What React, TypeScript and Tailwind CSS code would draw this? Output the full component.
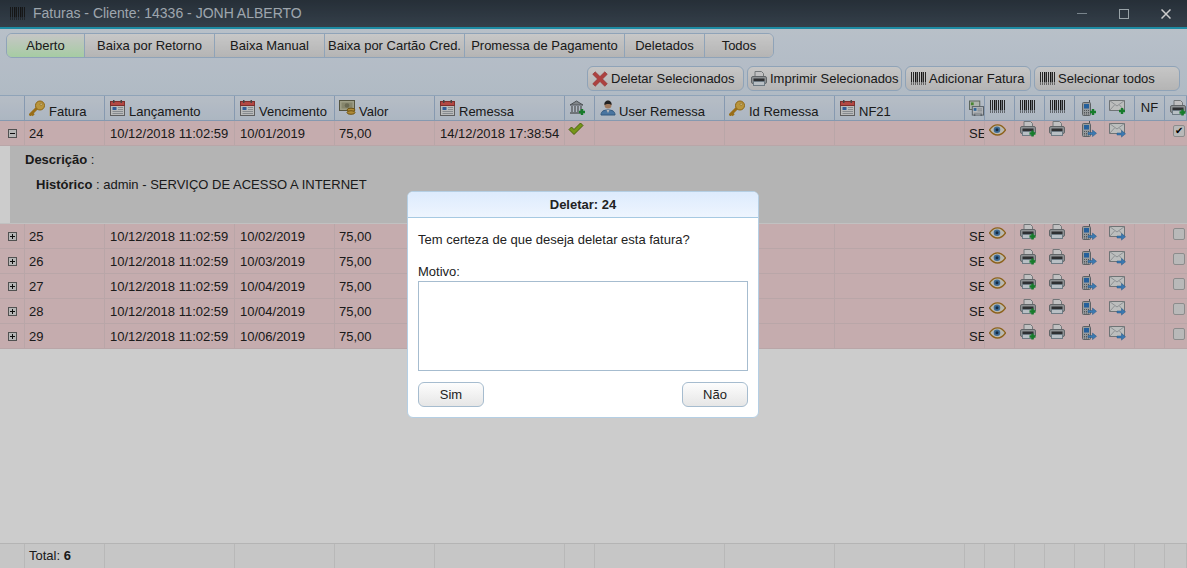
import type { ReactNode } from "react";

const gridCols =
  "grid-cols-[25px_80px_130px_100px_100px_130px_30px_130px_110px_130px_20px_30px_30px_30px_30px_30px_30px_22px]";

// ícones desenhados à mão, mesmo tamanho dos originais
function Barcode({ className = "" }: { className?: string }) {
  const bars = [0, 2, 4, 6, 8, 10, 12, 14];
  return (
    <svg width="15" height="13" viewBox="0 0 15 13" className={className}>
      {bars.map((x) => (
        <rect key={x} x={x} y="0" width={x === 4 || x === 10 ? 1.4 : 0.9} height="10.500" fill="#1a1a1a" />
      ))}
      <path d="M0 12h15" stroke="#1a1a1a" strokeWidth="1" strokeDasharray="1 1" />
    </svg>
  );
}

function Key() {
  return (
    <svg width="17" height="17" viewBox="0 0 17 17" className="-ml-[1px] -mr-[1px]">
      <path d="M1.500 14.500 7.500 8.500" stroke="#c08a1e" strokeWidth="3" strokeLinecap="round" />
      <path d="M3 15.500 5 13.500" stroke="#c08a1e" strokeWidth="2" />
      <circle cx="11" cy="5.500" r="4.500" fill="#e8bb4c" stroke="#b07f1c" />
      <circle cx="12.200" cy="4.300" r="1.200" fill="#fbe9a8" stroke="#b07f1c" strokeWidth="0.600" />
    </svg>
  );
}

function Calendar() {
  return (
    <svg width="15" height="16" viewBox="0 0 15 16">
      <rect x="0.500" y="1.500" width="14" height="14" fill="#e8eaea" stroke="#777" />
      <rect x="0.500" y="1.500" width="14" height="4" fill="#e05a56" stroke="#9d3a38" />
      <rect x="3" y="0" width="1.500" height="3" fill="#555" />
      <rect x="10.500" y="0" width="1.500" height="3" fill="#555" />
      <rect x="2.500" y="7" width="4" height="3" fill="#3f72bd" />
      <path d="M8 7.500h5M8 9.500h5M2.500 11.500h10.500M2.500 13.500h10.500" stroke="#a8aeb3" />
    </svg>
  );
}

function Money() {
  return (
    <svg width="17" height="15" viewBox="0 0 17 15" className="-ml-[1px] -mr-[1px]">
      <rect x="0.500" y="0.500" width="15" height="10" fill="#c6c6a8" stroke="#6b6b52" />
      <rect x="2.500" y="2.500" width="11" height="6" fill="#a8a888" />
      <circle cx="8" cy="5.500" r="2.300" fill="#85856a" />
      <ellipse cx="12" cy="10" rx="4" ry="1.800" fill="#dcae45" stroke="#8a6a1a" />
      <ellipse cx="12" cy="12.500" rx="4" ry="1.800" fill="#dcae45" stroke="#8a6a1a" />
    </svg>
  );
}

function Bank() {
  return (
    <svg width="17" height="16" viewBox="0 0 17 16">
      <path d="M1 5 7.500 1 14 5Z" fill="#a2a8ad" stroke="#5f656a" />
      <path d="M3 6v6M6 6v6M9 6v6M12 6v6" stroke="#7d8388" strokeWidth="1.600" />
      <rect x="1" y="12" width="13" height="2" fill="#8a9095" />
      <path d="M13 9v6M10 12h6" stroke="#1d9a36" strokeWidth="2.400" />
    </svg>
  );
}

function User() {
  return (
    <svg width="16" height="16" viewBox="0 0 16 16" className="-mr-[1px]">
      <path d="M1 15c0-4 3-5 7-5s7 1 7 5Z" fill="#5c93c9" stroke="#3f6f9e" />
      <path d="M6.500 10 8 13l1.500-3Z" fill="#e7e7e7" />
      <circle cx="8" cy="5" r="3.500" fill="#c99a78" />
      <path d="M4.500 5c-.5-3 1.500-4.500 3.500-4.500S12 2 11.500 5C10.500 3.500 6 3.500 4.500 5Z" fill="#2b2b2b" />
    </svg>
  );
}

function Cards() {
  return (
    <svg width="16" height="17" viewBox="0 0 16 17">
      <rect x="0.500" y="0.500" width="11" height="9" fill="#d9e0d8" stroke="#6f7b6f" />
      <rect x="2" y="2" width="3" height="3" fill="#5aa53c" />
      <rect x="3.500" y="6.500" width="12" height="9" fill="#e6e9ec" stroke="#69737b" />
      <rect x="5" y="8" width="3" height="3" fill="#3d7fbe" />
      <path d="M9 9h5M9 11h5M5 13.500h9" stroke="#969ea4" />
      <circle cx="6" cy="15.500" r="1" fill="#69737b" />
      <circle cx="13" cy="15.500" r="1" fill="#69737b" />
    </svg>
  );
}

function Printer({ badge }: { badge?: "plus" }) {
  return (
    <svg width="16" height="16" viewBox="0 0 16 16">
      <path d="M4 .5h6.500l2 2V6H4Z" fill="#f0f1f2" stroke="#8f9497" />
      <rect x="0.500" y="5.500" width="15" height="7" rx="1.500" fill="#b2b7ba" stroke="#7a7f82" />
      <rect x="2.500" y="7.500" width="11" height="2.500" fill="#3a3d3f" />
      <rect x="2.500" y="10.500" width="11" height="4" fill="#e6eff5" stroke="#8a9aa6" />
      {badge && <path d="M12.500 9.500v6M9.500 12.500h6" stroke="#1d9a36" strokeWidth="2.400" />}
    </svg>
  );
}

function Phone({ badge }: { badge: "plus" | "arrow" }) {
  return (
    <svg width="15" height="16" viewBox="0 0 15 16">
      <path d="M7.500 0v3" stroke="#666" />
      <rect x="0.500" y="2.500" width="8" height="13" rx="1" fill="#bcc1c4" stroke="#747a7e" />
      <rect x="2" y="4" width="5" height="4.500" fill="#2f78c4" />
      <path d="M2 10.500h5M2 12.500h5M2 14h5" stroke="#666b6f" strokeDasharray="1 1" />
      {badge === "plus" ? (
        <path d="M11 9v6M8 12h6" stroke="#1d9a36" strokeWidth="2.400" />
      ) : (
        <path d="M6 11.500h4.500V9l4 3.300-4 3.300v-2.100H6Z" fill="#4a98de" stroke="#2a6ca8" strokeWidth="0.500" />
      )}
    </svg>
  );
}

function Mail({ badge }: { badge: "plus" | "arrow" }) {
  return (
    <svg width="17" height="15" viewBox="0 0 17 15">
      <rect x="0.500" y="0.500" width="15" height="10" fill="#eceeed" stroke="#8b9194" />
      <path d="M.5.500 8 6l7.500-5.500M.5 10.500 5.500 5M15.500 10.500 10.500 5" fill="none" stroke="#b0b5b8" />
      {badge === "plus" ? (
        <path d="M13 8v6M10 11h6" stroke="#1d9a36" strokeWidth="2.400" />
      ) : (
        <path d="M8 10h4.500V7.500l4 3.300-4 3.300V12H8Z" fill="#4a98de" stroke="#2a6ca8" strokeWidth="0.500" />
      )}
    </svg>
  );
}

function Eye() {
  return (
    <svg width="17" height="12" viewBox="0 0 17 12">
      <path d="M.5 6C3 2 6 .8 8.500.8S14 2 16.500 6c-2.500 3.500-5.500 5-8 5S3 9.500.5 6Z" fill="#e8e6dc" stroke="#b07a22" strokeWidth="1.300" />
      <circle cx="8" cy="5.800" r="3.300" fill="#4d86ba" />
      <circle cx="8" cy="5.800" r="1.500" fill="#1d3550" />
    </svg>
  );
}

function Check() {
  return (
    <svg width="16" height="14" viewBox="0 0 16 14">
      <path d="M1 7.500 3.500 5l2.500 2.500L12.500 1 15 3.500 6 12.500Z" fill="#93bc1e" stroke="#5c7a10" />
    </svg>
  );
}

function RedX() {
  return (
    <svg width="16" height="16" viewBox="0 0 16 16">
      <path d="M3.200.8 8 5.500 12.800.8l2.500 2.500L10.500 8l4.800 4.800-2.500 2.500L8 10.500l-4.800 4.800-2.500-2.500L5.500 8 .7 3.300Z" fill="#d9524f" stroke="#b04240" strokeWidth="0.600" />
    </svg>
  );
}

function TreeToggle({ open }: { open?: boolean }) {
  return (
    <svg width="9" height="9" viewBox="0 0 9 9">
      <rect x="0.500" y="0.500" width="8" height="8" fill="#e4e4e4" stroke="#666" />
      <path d="M2 4.500h5" stroke="#111" />
      {!open && <path d="M4.500 2v5" stroke="#111" />}
    </svg>
  );
}

const tabs = [
  { label: "Aberto", w: "w-[78px]" },
  { label: "Baixa por Retorno", w: "w-[130px]" },
  { label: "Baixa Manual", w: "w-[110px]" },
  { label: "Baixa por Cartão Cred.", w: "w-[140px]" },
  { label: "Promessa de Pagamento", w: "w-[160px]" },
  { label: "Deletados", w: "w-[80px]" },
  { label: "Todos", w: "w-[68px]" },
];

function ActionButton({ icon, label, w }: { icon: ReactNode; label: string; w: string }) {
  return (
    <div className={`${w} h-[25px] flex items-center gap-[3px] rounded-[6px] border border-[#b3cce6] bg-gradient-to-b from-[#f8f8f8] to-[#e2e2e2] whitespace-nowrap`}>
      {icon}
      <span>{label}</span>
    </div>
  );
}

function HeadCell({ icon, label, pl = "pl-[5px]" }: { icon?: ReactNode; label?: string; pl?: string }) {
  return (
    <div className={`h-[24px] border-r border-[#a8c0dc] flex items-start gap-[4px] overflow-hidden whitespace-nowrap pt-[4px] ${pl}`}>
      {icon}
      {label && <span className="mt-[4px] leading-[15px]">{label}</span>}
    </div>
  );
}

function Cell({ children, pl = "pl-[5px]" }: { children?: ReactNode; pl?: string }) {
  return (
    <div className={`h-[24px] border-r border-[#e8d0d2] overflow-hidden whitespace-nowrap pt-[5px] leading-[15px] ${pl}`}>
      {children}
    </div>
  );
}

function IconCell({ children, cls }: { children?: ReactNode; cls: string }) {
  return <div className={`h-[24px] border-r border-[#e8d0d2] overflow-hidden ${cls}`}>{children}</div>;
}

function Row({ id, venc, remessa, open }: { id: number; venc: string; remessa?: string; open?: boolean }) {
  return (
    <div className={`grid ${gridCols} bg-[#f7d8da] border-b border-[#e8d0d2]`}>
      <div className="h-[24px] border-r border-[#e8d0d2] flex items-center justify-center">
        <TreeToggle open={open} />
      </div>
      <Cell pl="pl-[4px]">{id}</Cell>
      <Cell>10/12/2018 11:02:59</Cell>
      <Cell>{venc}</Cell>
      <Cell pl="pl-[4px]">75,00</Cell>
      <Cell>{remessa}</Cell>
      <IconCell cls="pl-[3px] pt-[1px]">{remessa && <Check />}</IconCell>
      <Cell />
      <Cell />
      <Cell />
      <Cell pl="pl-[4px]">SE</Cell>
      <IconCell cls="pl-[4px] pt-[3px]"><Eye /></IconCell>
      <IconCell cls="pl-[5px]"><Printer badge="plus" /></IconCell>
      <IconCell cls="pl-[4px]"><Printer /></IconCell>
      <IconCell cls="pl-[7px]"><Phone badge="arrow" /></IconCell>
      <IconCell cls="pl-[4px] pt-[2px]"><Mail badge="arrow" /></IconCell>
      <Cell />
      <div className="h-[24px] pl-[8px] pt-[4px]">
        <div className="w-[12px] h-[12px] rounded-[2px] border border-[#b0b0b0] bg-[#e8e8e8] flex items-center justify-center text-[10px] leading-none text-black">
          {open ? "✔" : ""}
        </div>
      </div>
    </div>
  );
}

export default function App() {
  const rows = [
    { id: 25, venc: "10/02/2019" },
    { id: 26, venc: "10/03/2019" },
    { id: 27, venc: "10/04/2019" },
    { id: 28, venc: "10/04/2019" },
    { id: 29, venc: "10/06/2019" },
  ];

  return (
    <div className="relative w-[1187px] h-[568px] overflow-hidden flex flex-col bg-white text-[13px] text-[#222] font-['Liberation_Sans',Arial,sans-serif]">
      {/* barra de título */}
      <div className="h-[29px] shrink-0 flex items-center pl-[10px] bg-gradient-to-b from-[#303b46] to-[#42505d] border-b-[2px] border-[#25b0ce]">
        <Barcode />
        <span className="ml-[8px] text-[14px] text-[#c6d0da]">Faturas - Cliente: 14336 - JONH ALBERTO</span>
        <div className="ml-auto flex items-center">
          <div className="w-[10px] h-[1px] bg-[#98a5af] mr-[32px]" />
          <div className="w-[10px] h-[10px] border border-[#c0ccd3] mr-[32px]" />
          <svg width="10" height="10" viewBox="0 0 10 10" className="mr-[16px]">
            <path d="M.5.5l9 9M9.500.5l-9 9" stroke="#fff" strokeWidth="1.500" />
          </svg>
        </div>
      </div>

      {/* abas e ações */}
      <div className="h-[67px] shrink-0 bg-gradient-to-b from-[#e6f0fb] to-[#dde9f6] flex flex-col border-b border-[#b3cce6]">
        <div className="flex ml-[6px] mt-[4px] w-fit h-[25px] rounded-[6px] border border-[#b3cce6] overflow-hidden">
          {tabs.map((t, i) => (
            <div
              key={t.label}
              className={`${t.w} flex items-center justify-center whitespace-nowrap ${i < tabs.length - 1 ? "border-r border-[#b3cce6]" : ""} ${i === 0 ? "bg-gradient-to-b from-[#f8f8f8] to-[#d0ffcc]" : "bg-gradient-to-b from-[#fafafa] to-[#e2e2e2]"}`}
            >
              {t.label}
            </div>
          ))}
        </div>
        <div className="flex justify-end gap-[3px] mt-[8px] pr-[7px]">
          <ActionButton icon={<div className="ml-[4px]"><RedX /></div>} label="Deletar Selecionados" w="w-[157px]" />
          <ActionButton icon={<div className="ml-[3px]"><Printer /></div>} label="Imprimir Selecionados" w="w-[155px]" />
          <ActionButton icon={<Barcode className="ml-[5px]" />} label="Adicionar Fatura" w="w-[126px]" />
          <ActionButton icon={<Barcode className="ml-[5px]" />} label="Selecionar todos" w="w-[146px]" />
        </div>
      </div>

      {/* cabeçalho da grade */}
      <div className={`grid ${gridCols} bg-gradient-to-b from-[#e4edf8] to-[#d8e4f2] border-b border-[#a8c0dc]`}>
        <HeadCell />
        <HeadCell icon={<Key />} label="Fatura" />
        <HeadCell icon={<Calendar />} label="Lançamento" />
        <HeadCell icon={<Calendar />} label="Vencimento" />
        <HeadCell icon={<Money />} label="Valor" />
        <HeadCell icon={<Calendar />} label="Remessa" />
        <HeadCell icon={<Bank />} pl="pl-[4px]" />
        <HeadCell icon={<User />} label="User Remessa" />
        <HeadCell icon={<Key />} label="Id Remessa" />
        <HeadCell icon={<Calendar />} label="NF21" />
        <HeadCell icon={<Cards />} pl="pl-[4px]" />
        <HeadCell icon={<Barcode />} pl="pl-[5px]" />
        <HeadCell icon={<Barcode />} pl="pl-[5px]" />
        <HeadCell icon={<Barcode />} pl="pl-[5px]" />
        <HeadCell icon={<Phone badge="plus" />} pl="pl-[7px]" />
        <HeadCell icon={<Mail badge="plus" />} pl="pl-[4px]" />
        <div className="h-[24px] border-r border-[#a8c0dc] flex justify-center pt-[4px] leading-[15px]">NF</div>
        <HeadCell icon={<Printer badge="plus" />} pl="pl-[5px]" />
      </div>

      <Row id={24} venc="10/01/2019" remessa="14/12/2018 17:38:54" open />

      {/* detalhe da fatura aberta */}
      <div className="h-[78px] shrink-0 flex border-b border-[#f2f2f2]">
        <div className="w-[10px] bg-white" />
        <div className="flex-1 bg-[#e2e2e2] pl-[15px] pt-[6px] leading-[15px]">
          <div><b>Descrição</b> :</div>
          <div className="ml-[11px] mt-[10px]"><b>Histórico</b> : admin - SERVIÇO DE ACESSO A INTERNET</div>
        </div>
      </div>

      {rows.map((r) => (
        <Row key={r.id} id={r.id} venc={r.venc} />
      ))}

      {/* rodapé com totais */}
      <div className={`mt-auto grid ${gridCols} border-t border-[#e2e2e2] bg-[#f8f8f8]`}>
        {Array.from({ length: 18 }).map((_, i) => (
          <div key={i} className="h-[24px] border-r border-[#e6e6e6] pl-[4px] pt-[4px] leading-[15px] whitespace-nowrap">
            {i === 1 && <>Total: <b>6</b></>}
          </div>
        ))}
      </div>

      {/* máscara do modal */}
      <div className="absolute inset-0 bg-black/20" />

      <div className="absolute left-[407px] top-[191px] w-[352px] h-[227px] rounded-[6px] bg-white border border-[#b5cfe4] overflow-hidden flex flex-col">
        <div className="h-[26px] shrink-0 flex items-center justify-center font-bold bg-gradient-to-b from-[#ddebfd] to-[#eef5fe] border-b border-[#a6c9e2]">
          Deletar: 24
        </div>
        <div className="flex-1 flex flex-col px-[10px]">
          <div className="mt-[14px] leading-[15px]">Tem certeza de que deseja deletar esta fatura?</div>
          <div className="mt-[17px] leading-[15px]">Motivo:</div>
          <div className="mt-[2px] h-[90px] border border-[#a6bccf]" />
          <div className="mt-[11px] flex justify-between">
            <div className="w-[66px] h-[25px] rounded-[6px] border border-[#a6bccf] bg-gradient-to-b from-[#fdfdfd] to-[#e6e6e6] flex items-center justify-center">Sim</div>
            <div className="w-[66px] h-[25px] rounded-[6px] border border-[#a6bccf] bg-gradient-to-b from-[#fdfdfd] to-[#e6e6e6] flex items-center justify-center">Não</div>
          </div>
        </div>
      </div>
    </div>
  );
}
